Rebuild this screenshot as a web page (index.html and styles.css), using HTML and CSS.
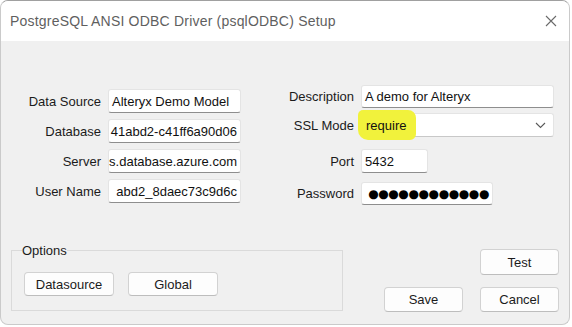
FILE: index.html
```html
<!DOCTYPE html>
<html>
<head>
    <meta charset="UTF-8">
    <title>PostgreSQL ANSI ODBC Driver (psqlODBC) Setup</title>
    <link rel="stylesheet" href="styles.css">
</head>
<body>
    <div class="window">
        <div class="titlebar">
            <span class="title">PostgreSQL ANSI ODBC Driver (psqlODBC) Setup</span>
            <svg class="close" width="12" height="12" viewBox="0 0 12 12">
                <path d="M1 1 L11 11 M11 1 L1 11" stroke="#6a6a6a" stroke-width="1.1" fill="none"/>
            </svg>
        </div>

        <div class="content">
            <div class="fields">
                <div class="column left">
                    <div class="row">
                        <label>Data Source</label>
                        <div class="input w133"><span>Alteryx Demo Model</span></div>
                    </div>
                    <div class="row">
                        <label>Database</label>
                        <div class="input w133 end"><span>41abd2-c41ff6a90d06</span></div>
                    </div>
                    <div class="row">
                        <label>Server</label>
                        <div class="input w133 end"><span>s.database.azure.com</span></div>
                    </div>
                    <div class="row">
                        <label>User Name</label>
                        <div class="input w133 end"><span>abd2_8daec73c9d6c</span></div>
                    </div>
                </div>

                <div class="column right">
                    <div class="row r-desc">
                        <label>Description</label>
                        <div class="input w193"><span>A demo for Alteryx</span></div>
                    </div>
                    <div class="row r-ssl">
                        <label>SSL Mode</label>
                        <div class="input w193 select">
                            <span class="highlight"></span>
                            <span class="value">require</span>
                            <svg class="chevron" width="11" height="7" viewBox="0 0 11 7">
                                <path d="M1 1 L5.5 5.5 L10 1" stroke="#5a5a5a" stroke-width="1.1" fill="none"/>
                            </svg>
                        </div>
                    </div>
                    <div class="row r-port">
                        <label>Port</label>
                        <div class="input w67"><span>5432</span></div>
                    </div>
                    <div class="row r-pass">
                        <label>Password</label>
                        <div class="input w132 end"><span class="dots">●●●●●●●●●●●●</span></div>
                    </div>
                </div>
            </div>

            <div class="bottom">
                <fieldset class="options">
                    <legend>Options</legend>
                    <button class="btn opt">Datasource</button>
                    <button class="btn opt">Global</button>
                </fieldset>
                <div class="actions">
                    <button class="btn test">Test</button>
                    <button class="btn">Save</button>
                    <button class="btn">Cancel</button>
                </div>
            </div>
        </div>
    </div>
</body>
</html>
```

FILE: styles.css
```css
body {
    margin: 0;
    background: #fff;
    font-family: "Liberation Sans", Arial, sans-serif;
    color: #1b1b1b;
}
.window {
    width: 570px;
    height: 325px;
    box-sizing: border-box;
    border: 1px solid #cacaca;
    border-top-color: #a0a0a0;
    border-radius: 8px;
    overflow: hidden;
    background: #f0f0f0;
}
.titlebar {
    height: 40px;
    background: #fff;
    display: flex;
    align-items: center;
    justify-content: space-between;
    padding: 0 12px 0 9px;
}
.title {
    font-size: 14px;
    letter-spacing: 0.2px;
    color: #5f5f5f;
}
.content {
    padding-top: 44px;
}
.fields {
    display: flex;
    align-items: flex-start;
}
.column {
    display: flex;
    flex-direction: column;
}
.row {
    display: flex;
    align-items: center;
    gap: 7px;
    height: 24px;
    font-size: 13px;
}
.row label {
    flex-shrink: 0;
    text-align: right;
}
.left {
    margin-top: 4px;
    gap: 6px;
}
.left label {
    width: 100px;
}
.right {
    margin-left: 33px;
}
.right label {
    width: 80px;
}
.r-desc { height: 23px; }
.r-ssl { margin-top: 5px; }
.r-port { margin-top: 12px; }
.r-pass { margin-top: 9px; height: 23px; }

.input {
    box-sizing: border-box;
    height: 100%;
    display: flex;
    align-items: center;
    padding: 0 3px;
    background: #fff;
    border: 1px solid #e4e4e4;
    border-bottom-color: #8e8e8e;
    border-radius: 3px;
    overflow: hidden;
    white-space: nowrap;
    color: #111;
}
.input span {
    flex-shrink: 0;
}
.input.end {
    justify-content: flex-end;
}
.w133 { width: 133px; }
.w193 { width: 193px; }
.w67 { width: 67px; }
.w132 { width: 132px; }

.select {
    position: relative;
    overflow: visible;
    justify-content: space-between;
    border-bottom-color: #c8c8c8;
    padding: 0 7px 0 4px;
}
.select .value {
    position: relative;
}
/* marker stroke drawn over the combo box in the screenshot */
.highlight {
    position: absolute;
    left: -4px;
    top: -4px;
    width: 58px;
    height: 30px;
    background: #f1f23c;
    border-radius: 5px 8px 6px 10px;
}
.dots {
    font-family: "DejaVu Sans", sans-serif;
    font-size: 12px;
    letter-spacing: -0.4px;
    color: #000;
}

.bottom {
    display: flex;
    align-items: flex-start;
    margin-top: 38px;
    padding-left: 10px;
}
.options {
    margin: 0;
    width: 332px;
    box-sizing: border-box;
    padding: 14px 12px 14px 12px;
    border: 1px solid #dadada;
    display: flex;
    gap: 14px;
}
.options legend {
    font-size: 13px;
    line-height: 15px;
    padding: 0;
    margin-left: -2px;
}
.btn {
    font-family: "Liberation Sans", Arial, sans-serif;
    font-size: 13px;
    color: #1b1b1b;
    background: #fdfdfd;
    border: 1px solid #d2d2d2;
    border-bottom-color: #bdbdbd;
    border-radius: 4px;
    padding: 0;
    height: 25px;
}
.opt {
    width: 90px;
    height: 24px;
}
.actions {
    margin-left: 41px;
    margin-top: 6px;
    display: grid;
    grid-template-columns: 79px 79px;
    column-gap: 17px;
    row-gap: 12px;
}
.test {
    grid-column: 2;
    height: 26px;
}
```
